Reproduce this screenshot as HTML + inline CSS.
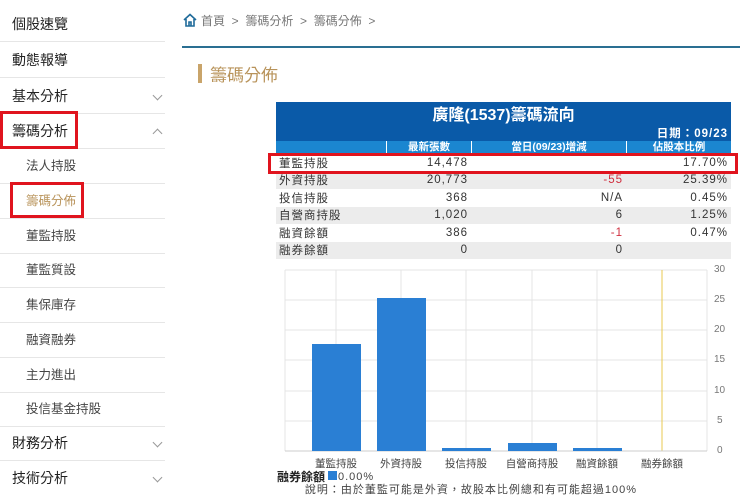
<!DOCTYPE html>
<html><head><meta charset="utf-8"><style>
*{margin:0;padding:0;box-sizing:border-box}
body{width:740px;height:497px;overflow:hidden;background:#fff;font-family:"Liberation Sans","Noto Sans CJK TC",sans-serif;position:relative;color:#333}
.side{position:absolute;left:0;top:0;width:165px}
.it{position:absolute;left:0;width:165px;height:35px;border-bottom:1px solid #e6e6e6;font-size:14px;line-height:35px;padding-left:12px;color:#222}
.sub{font-size:12.5px;padding-left:26px;color:#444}
.chev{position:absolute;right:4px;top:13px;width:7px;height:7px;border-right:1px solid #999;border-bottom:1px solid #999;transform:rotate(45deg)}
.chev.up{top:16px;transform:rotate(-135deg)}
.red{position:absolute;border:3px solid #e0141e}
table{position:absolute;left:276px;top:102px;width:455px;border-collapse:collapse;font-size:11.5px;letter-spacing:1px}
td{height:17.5px;padding:0 3px;text-align:right;color:#333}
td:first-child{text-align:left}
tr.g td{background:#ececec}
.n{color:#d03040}
</style></head><body>
<div class="side">
<div class="it" style="top:7px">個股速覽</div>
<div class="it" style="top:43px">動態報導</div>
<div class="it" style="top:79px">基本分析<span class="chev"></span></div>
<div class="it" style="top:114px">籌碼分析<span class="chev up"></span></div>
<div class="it sub" style="top:149px">法人持股</div>
<div class="it sub" style="top:184px;color:#b8935a">籌碼分佈</div>
<div class="it sub" style="top:219px">董監持股</div>
<div class="it sub" style="top:253px">董監質設</div>
<div class="it sub" style="top:288px">集保庫存</div>
<div class="it sub" style="top:323px">融資融券</div>
<div class="it sub" style="top:358px">主力進出</div>
<div class="it sub" style="top:392px">投信基金持股</div>
<div class="it" style="top:426px">財務分析<span class="chev"></span></div>
<div class="it" style="top:461px;border:none">技術分析<span class="chev"></span></div>
</div>
<div class="red" style="left:0;top:111px;width:78px;height:38px"></div>
<div class="red" style="left:10px;top:182px;width:74px;height:36px"></div>

<svg style="position:absolute;left:182px;top:12px" width="16" height="16" viewBox="0 0 16 16"><path d="M2 8L8 2.5L14 8M4 7V14H12V7M7 14V10H9V14" fill="none" stroke="#1f6b9a" stroke-width="1.6"/></svg>
<div style="position:absolute;left:201px;top:12px;font-size:12px;color:#777">首頁 &nbsp;&gt;&nbsp; 籌碼分析 &nbsp;&gt;&nbsp; 籌碼分佈 &nbsp;&gt;</div>
<div style="position:absolute;left:182px;top:46px;width:558px;height:2px;background:#2a6f92"></div>
<div style="position:absolute;left:198px;top:64px;width:4px;height:19px;background:#c9a46a"></div>
<div style="position:absolute;left:210px;top:61px;font-size:17px;color:#b8935a">籌碼分佈</div>

<div style="position:absolute;left:276px;top:102px;width:455px;height:39px;background:#0a5aa8;color:#fff">
<div style="text-align:center;font-size:16px;font-weight:bold;line-height:26px;padding-top:1px">廣隆(1537)籌碼流向</div>
<div style="position:absolute;right:3px;top:23px;font-size:11.5px;font-weight:bold;letter-spacing:1px">日期：09/23</div>
</div>
<div style="position:absolute;left:276px;top:141px;width:455px;height:12px;background:#1b86d0;color:#fff;font-size:10.5px;font-weight:bold;line-height:13px">
<span style="position:absolute;left:110px;width:85px;border-left:1px solid #fff;text-align:center">最新張數</span>
<span style="position:absolute;left:195px;width:155px;border-left:1px solid #fff;text-align:center">當日(09/23)增減</span>
<span style="position:absolute;left:350px;width:105px;border-left:1px solid #fff;text-align:center">佔股本比例</span>
</div>
<table style="top:154px">
<colgroup><col style="width:110px"><col style="width:85px"><col style="width:155px"><col style="width:105px"></colgroup>
<tr><td>董監持股</td><td>14,478</td><td></td><td>17.70%</td></tr>
<tr class="g"><td>外資持股</td><td>20,773</td><td class="n">-55</td><td>25.39%</td></tr>
<tr><td>投信持股</td><td>368</td><td>N/A</td><td>0.45%</td></tr>
<tr class="g"><td>自營商持股</td><td>1,020</td><td>6</td><td>1.25%</td></tr>
<tr><td>融資餘額</td><td>386</td><td class="n">-1</td><td>0.47%</td></tr>
<tr class="g"><td>融券餘額</td><td>0</td><td>0</td><td></td></tr>
</table>
<div class="red" style="left:268px;top:153px;width:470px;height:21px"></div>

<svg style="position:absolute;left:0;top:0" width="740" height="497">
<g stroke="#e4e4e4" stroke-width="1">
<line x1="285" y1="270" x2="707" y2="270"/><line x1="285" y1="300" x2="707" y2="300"/><line x1="285" y1="330" x2="707" y2="330"/><line x1="285" y1="360" x2="707" y2="360"/><line x1="285" y1="391" x2="707" y2="391"/><line x1="285" y1="421" x2="707" y2="421"/>
<line x1="336" y1="270" x2="336" y2="451"/><line x1="401" y1="270" x2="401" y2="451"/><line x1="466" y1="270" x2="466" y2="451"/><line x1="532" y1="270" x2="532" y2="451"/><line x1="597" y1="270" x2="597" y2="451"/>
<line x1="285" y1="270" x2="285" y2="451"/><line x1="707" y1="270" x2="707" y2="451"/>
</g>
<line x1="662" y1="270" x2="662" y2="451" stroke="#e8c850"/>
<line x1="285" y1="451" x2="707" y2="451" stroke="#ccc"/>
<g fill="#2a7fd4">
<rect x="312" y="344" width="49" height="107"/><rect x="377" y="298" width="49" height="153"/><rect x="442" y="448" width="49" height="3"/><rect x="508" y="443" width="49" height="8"/><rect x="573" y="448" width="49" height="3"/>
</g>
<g font-size="10" fill="#777" font-family="Liberation Sans,sans-serif">
<text x="714" y="272">30</text><text x="714" y="302">25</text><text x="714" y="332">20</text><text x="714" y="362">15</text><text x="714" y="393">10</text><text x="717" y="423">5</text><text x="717" y="453">0</text>
</g>
<g font-size="10.5" fill="#444" text-anchor="middle" font-family="Liberation Sans,Noto Sans CJK TC,sans-serif">
<text x="336" y="467">董監持股</text><text x="401" y="467">外資持股</text><text x="466" y="467">投信持股</text><text x="532" y="467">自營商持股</text><text x="597" y="467">融資餘額</text><text x="662" y="467">融券餘額</text>
</g>
<text x="277" y="481" font-size="12" font-weight="bold" fill="#222" font-family="Liberation Sans,Noto Sans CJK TC,sans-serif">融券餘額</text>
<rect x="328" y="471" width="9" height="9" fill="#2a7fd4"/>
<text x="338" y="480" font-size="11" fill="#444" font-family="Liberation Sans,sans-serif" letter-spacing="1">0.00%</text>
<text x="471" y="493" font-size="11" fill="#444" text-anchor="middle" letter-spacing="1" font-family="Liberation Sans,Noto Sans CJK TC,sans-serif">說明：由於董監可能是外資，故股本比例總和有可能超過100%</text>
</svg>
</body></html>
